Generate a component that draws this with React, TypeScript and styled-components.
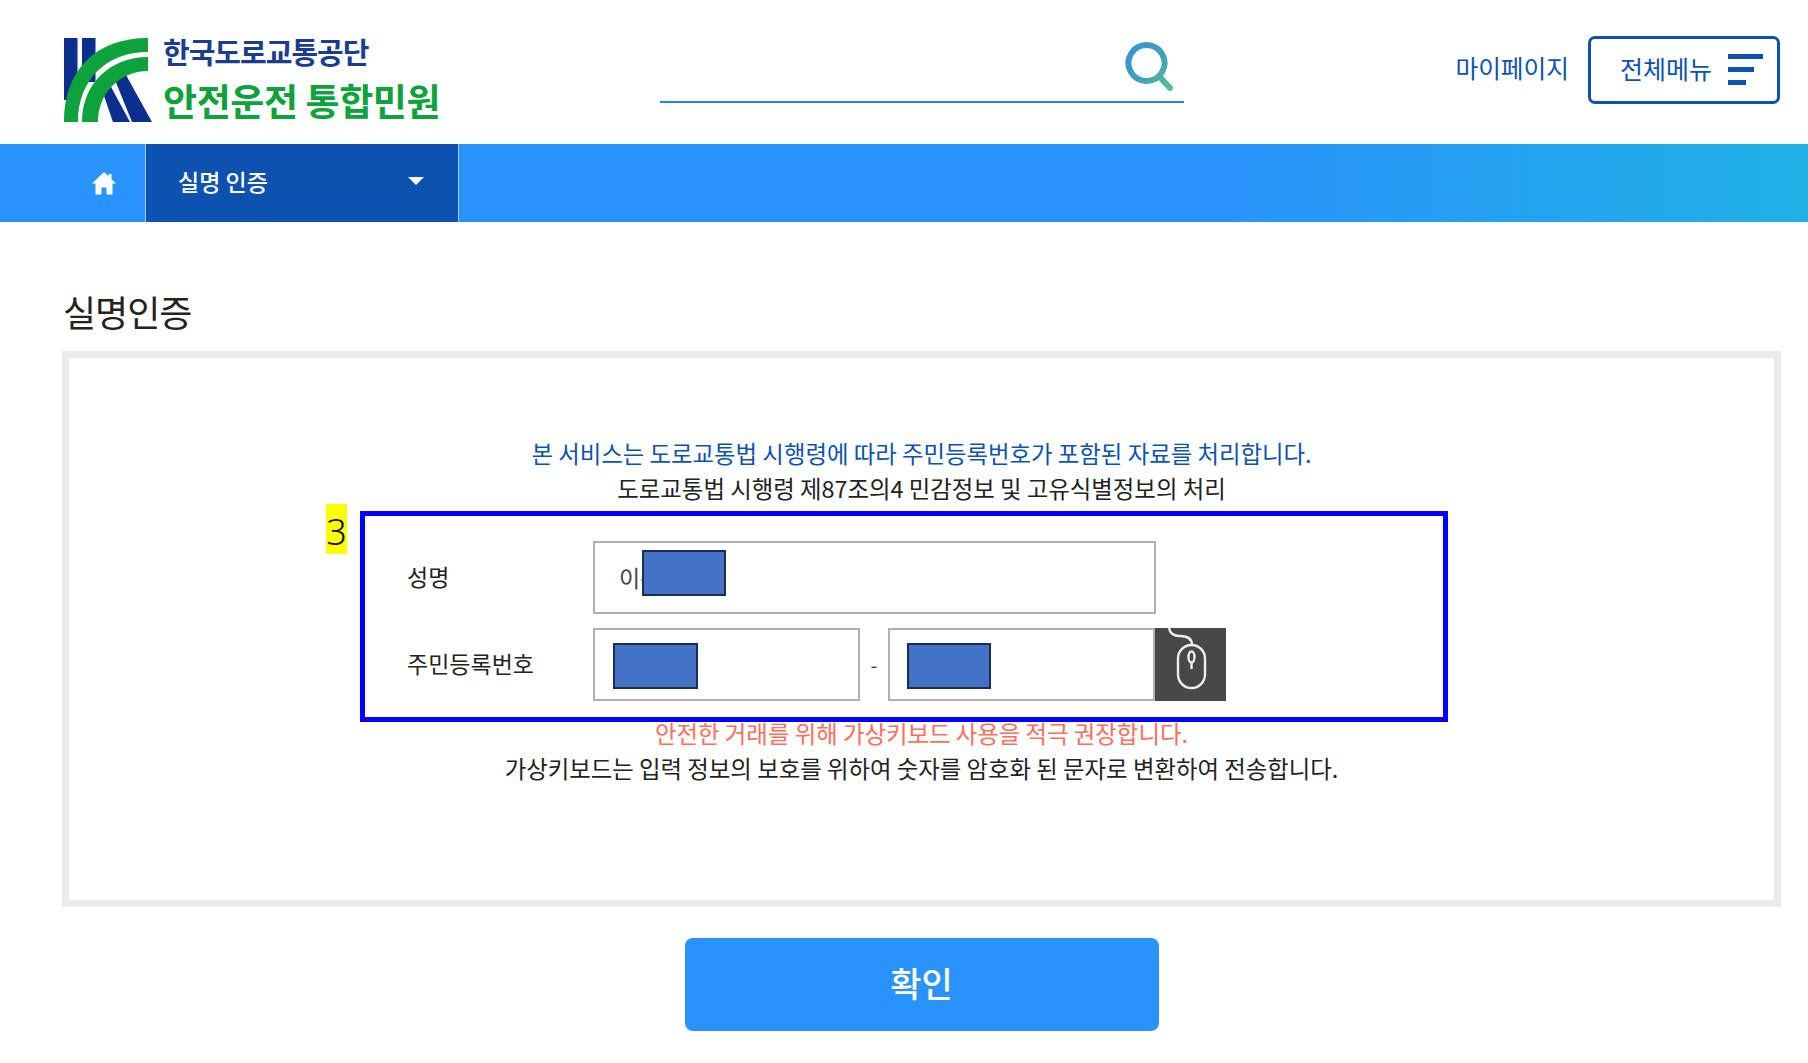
import React from "react";
import styled, { createGlobalStyle } from "styled-components";

const Global = createGlobalStyle`
  html, body { margin: 0; padding: 0; background: #fff; }
  body { font-family: "Noto Sans CJK KR", "Noto Sans", sans-serif; color: #222; }
  * { box-sizing: border-box; }
`;

const Page = styled.div`
  width: 1808px;
  height: 1063px;
  overflow: hidden;
  display: flex;
  flex-direction: column;
`;

const Header = styled.header`
  height: 144px;
  display: flex;
  align-items: flex-start;
  padding-left: 64px;
`;

const Brand = styled.div`
  width: 596px;
  height: 85px;
  margin-top: 38px;
  display: flex;
  gap: 9px;
`;

const BrandText = styled.div`
  display: flex;
  flex-direction: column;
  margin-top: -2px;
`;

const BrandTop = styled.div`
  color: #1c3d8f;
  font-size: 29px;
  font-weight: 700;
  line-height: 30px;
  letter-spacing: -1px;
`;

const BrandBottom = styled.div`
  margin-top: 15px;
  color: #0ea23c;
  font-size: 37px;
  font-weight: 700;
  line-height: 38px;
  letter-spacing: -0.4px;
`;

const SearchBar = styled.div`
  width: 524px;
  height: 103px;
  border-bottom: 2px solid #1f86ea;
  display: flex;
  justify-content: flex-end;
  padding: 41px 8px 0 0;
`;

const HeaderLinks = styled.div`
  margin-left: auto;
  margin-right: 28px;
  margin-top: 36px;
  display: flex;
  align-items: center;
  gap: 19px;
`;

const MyPage = styled.a`
  color: #0d52b0;
  font-size: 24.7px;
  line-height: 62px;
  height: 68px;
`;

const MenuButton = styled.button`
  width: 192px;
  height: 68px;
  background: #fff;
  border: 3px solid #0d52b0;
  border-radius: 7px;
  color: #0d52b0;
  font: inherit;
  font-size: 25px;
  line-height: 58px;
  display: flex;
  align-items: flex-start;
  gap: 16px;
  padding: 0 0 0 29px;
`;

const MenuBars = styled.span`
  display: flex;
  flex-direction: column;
  gap: 8px;
  margin-top: 15px;
`;

const MenuBar = styled.i<{ $w: number }>`
  display: block;
  height: 5px;
  width: ${(p) => p.$w}px;
  background: #0d52b0;
`;

const Nav = styled.nav`
  height: 78px;
  display: flex;
  background: linear-gradient(90deg, #2a93fb 0%, #2a93fb 68%, #1fb1e5 100%);
`;

const HomeCell = styled.a`
  width: 146px;
  border-right: 1px solid #a5cdf8;
  display: flex;
  align-items: center;
  justify-content: center;
  padding-left: 62px;
`;

const NavSelect = styled.div`
  width: 313px;
  background: #0d52b0;
  border-right: 1px solid #a5cdf8;
  color: #fff;
  font-size: 23px;
  font-weight: 500;
  display: flex;
  align-items: center;
  justify-content: space-between;
  padding: 0 34px 4px 32px;
`;

const Caret = styled.i`
  width: 0;
  height: 0;
  border-left: 8px solid transparent;
  border-right: 8px solid transparent;
  border-top: 8px solid #fff;
`;

const Main = styled.main`
  padding: 69px 27px 0 62px;
  display: flex;
  flex-direction: column;
`;

const Title = styled.h1`
  margin: 0 0 20px 1px;
  font-size: 36px;
  font-weight: 400;
  line-height: 40px;
  letter-spacing: -1px;
  color: #222;
`;

const Panel = styled.section`
  height: 556px;
  border: 7px solid #ebebeb;
  padding-top: 78px;
  display: flex;
  flex-direction: column;
`;

const Notice = styled.p<{ $color: string }>`
  margin: 0;
  text-align: center;
  font-size: 23.4px;
  line-height: 35px;
  height: 35px;
  color: ${(p) => p.$color};
`;

const Highlight = styled.div`
  position: relative;
  width: 1088px;
  height: 211px;
  margin: 5px 0 -6px 291px;
  border: 5px solid #0000ff;
  padding: 25px 0 0 42px;
  display: flex;
  flex-direction: column;
  gap: 14px;
`;

const Tag = styled.span`
  position: absolute;
  left: -39px;
  top: -12px;
  width: 21px;
  height: 50px;
  background: #ffff00;
  color: #111;
  font-family: "Noto Sans", sans-serif;
  font-weight: 300;
  font-size: 36px;
  line-height: 55px;
  text-align: center;
`;

const Row = styled.div`
  display: flex;
  align-items: center;
  height: 73px;
`;

const Label = styled.label`
  width: 186px;
  font-size: 23px;
  line-height: 70px;
  height: 73px;
  color: #222;
`;

const Field = styled.div<{ $w: number }>`
  position: relative;
  width: ${(p) => p.$w}px;
  height: 73px;
  border: 2px solid #b0b0b0;
  background: #fff;
  font-size: 23px;
  line-height: 69px;
  padding-left: 24px;
  color: #444;
  overflow: hidden;
`;

const Mask = styled.i<{ $l: number; $t: number; $w: number }>`
  position: absolute;
  left: ${(p) => p.$l}px;
  top: ${(p) => p.$t}px;
  width: ${(p) => p.$w}px;
  height: 46px;
  background: #4472c4;
  border: 2px solid #1a2e52;
`;

const Dash = styled.span`
  width: 28px;
  text-align: center;
  font-size: 20px;
  color: #444;
`;

const KeyboardButton = styled.button`
  width: 72px;
  height: 73px;
  margin-left: -1px;
  padding: 0;
  border: 0;
  background: #484848;
  display: block;
`;

const Actions = styled.div`
  display: flex;
  justify-content: center;
  margin-top: 31px;
`;

const Confirm = styled.button`
  width: 474px;
  height: 93px;
  border: 0;
  border-radius: 8px;
  background: #2a93fb;
  color: #fff;
  font: inherit;
  font-size: 34px;
  font-weight: 500;
  padding: 0 0 4px;
`;

const Logo = () => (
  <svg width="90" height="85" viewBox="0 0 90 85">
    <rect x="0" y="0" width="13.5" height="62" fill="#0a2f8c" />
    <rect x="18" y="0" width="13.5" height="44" fill="#0a2f8c" />
    <polygon points="39,55 46,47 66,84 49,84" fill="#0a2f8c" />
    <polygon points="51,42 62,37 88,84 68,84" fill="#0a2f8c" />
    <path d="M0 84C0 32 32 0 84 0L84 14C42 14 14 42 14 84Z" fill="#0ea23c" />
    <path d="M18 84C18 46 46 19 84 19L84 33C56 33 34 55 34 84Z" fill="#0ea23c" />
  </svg>
);

const SearchIcon = () => (
  <svg width="52" height="52" viewBox="0 0 52 52" fill="none">
    <defs>
      <linearGradient id="sg" x1="0" y1="0" x2="1" y2="1">
        <stop offset="0" stopColor="#3596d2" />
        <stop offset="0.5" stopColor="#3e9fc0" />
        <stop offset="1" stopColor="#56c08c" />
      </linearGradient>
    </defs>
    <path
      d="M22.5 4a18 18 0 1 0 0.01 0ZM35.5 35.5L46 47"
      stroke="url(#sg)"
      strokeWidth="6"
      strokeLinecap="round"
    />
  </svg>
);

const HomeIcon = () => (
  <svg width="26" height="24" viewBox="0 0 26 24" fill="#fff">
    <path d="M13 1L1 12.5H4.5V23.5H10.5V16.5H15.5V23.5H21.5V12.5H25L20.5 8.2V3H17.5V5.3Z" />
  </svg>
);

const MouseIcon = () => (
  <svg width="72" height="73" viewBox="0 0 72 73" fill="none" stroke="#eee" strokeWidth="2.4">
    <path d="M15 0C16 6 20 8 26 8C34 8 38 11 38 17" />
    <rect x="24" y="17" width="27" height="43" rx="13.5" />
    <ellipse cx="37.5" cy="29" rx="3" ry="5.5" />
    <path d="M37.5 34.5V41" />
  </svg>
);

export default function App() {
  return (
    <Page>
      <Global />
      <Header>
        <Brand>
          <Logo />
          <BrandText>
            <BrandTop>한국도로교통공단</BrandTop>
            <BrandBottom>안전운전 통합민원</BrandBottom>
          </BrandText>
        </Brand>
        <SearchBar>
          <SearchIcon />
        </SearchBar>
        <HeaderLinks>
          <MyPage>마이페이지</MyPage>
          <MenuButton>
            전체메뉴
            <MenuBars>
              <MenuBar $w={35} />
              <MenuBar $w={26} />
              <MenuBar $w={18} />
            </MenuBars>
          </MenuButton>
        </HeaderLinks>
      </Header>
      <Nav>
        <HomeCell>
          <HomeIcon />
        </HomeCell>
        <NavSelect>
          실명 인증
          <Caret />
        </NavSelect>
      </Nav>
      <Main>
        <Title>실명인증</Title>
        <Panel>
          <Notice $color="#0d52b0">본 서비스는 도로교통법 시행령에 따라 주민등록번호가 포함된 자료를 처리합니다.</Notice>
          <Notice $color="#222">도로교통법 시행령 제87조의4 민감정보 및 고유식별정보의 처리</Notice>
          <Highlight>
            <Tag>3</Tag>
            <Row>
              <Label>성명</Label>
              <Field $w={563}>
                이름
                <Mask $l={47} $t={7} $w={84} />
              </Field>
            </Row>
            <Row>
              <Label>주민등록번호</Label>
              <Field $w={267}>
                <Mask $l={18} $t={13} $w={85} />
              </Field>
              <Dash>-</Dash>
              <Field $w={267}>
                <Mask $l={17} $t={13} $w={84} />
              </Field>
              <KeyboardButton>
                <MouseIcon />
              </KeyboardButton>
            </Row>
          </Highlight>
          <Notice $color="#ff6e5a">안전한 거래를 위해 가상키보드 사용을 적극 권장합니다.</Notice>
          <Notice $color="#222">가상키보드는 입력 정보의 보호를 위하여 숫자를 암호화 된 문자로 변환하여 전송합니다.</Notice>
        </Panel>
        <Actions>
          <Confirm>확인</Confirm>
        </Actions>
      </Main>
    </Page>
  );
}
